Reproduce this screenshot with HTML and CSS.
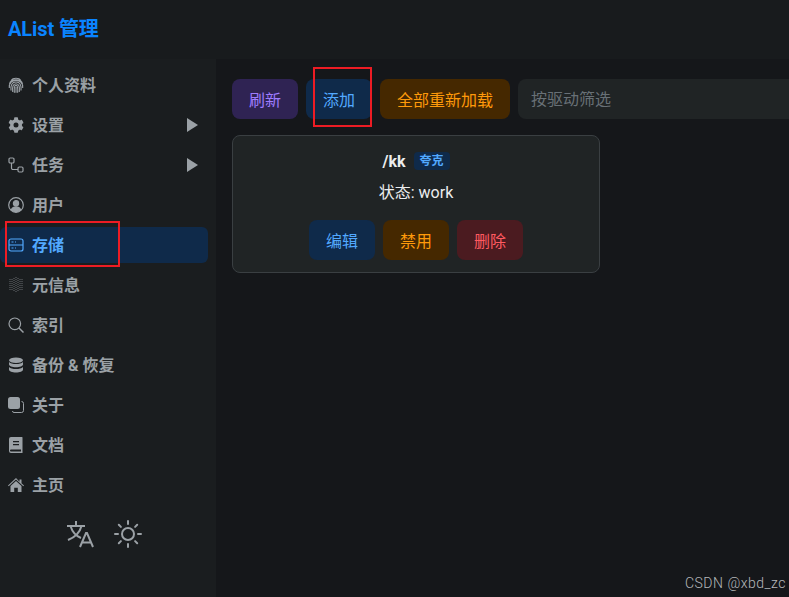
FILE: index.html
```html
<!DOCTYPE html>
<html lang="zh">
<head>
    <meta charset="UTF-8">
    <meta name="viewport" content="width=device-width, initial-scale=1.0">
    <title>AList 管理</title>
    <link rel="stylesheet" href="styles.css">
</head>
<body>
    <header class="topbar">
        <h1>AList 管理</h1>
    </header>

    <div class="layout">
        <aside class="sidebar">
            <nav class="menu">
                <a class="menu-item">
                    <svg class="icon" viewBox="0 0 16 16" fill="none" stroke="currentColor" stroke-width="1.100"><path d="M3 3.500C5 .5 11 .5 13 3.500M1.500 7c1-5.500 12-5.500 13 0M1.300 11C.8 6 4 3.500 8 3.500s7.200 2.500 6.700 7.500M3 13.500c-.6-5.500 1-8.500 5-8.500s5.600 3 5 8.500M4.700 15C4 10 5 6.800 8 6.800s4 3.200 3.300 8.200M6.400 15.800C6 11 6.300 8.400 8 8.400s2 2.600 1.600 7.400M8 10v5.800"/></svg>
                    <span>个人资料</span>
                </a>
                <a class="menu-item">
                    <svg class="icon" viewBox="0 0 512 512" fill="currentColor"><path fill-rule="evenodd" d="M487 316l-42-25a192 192 0 0 0 0-70l42-25c5-3 7-8 5-14-11-35-30-67-54-93-4-4-9-5-14-2l-42 24a190 190 0 0 0-61-35V28c0-6-4-10-9-11-36-8-73-8-108 0-5 1-9 5-9 11v48a190 190 0 0 0-61 35L92 87c-5-3-10-2-14 2-24 26-43 58-54 93-2 6 0 11 5 14l42 25a192 192 0 0 0 0 70l-42 25c-5 3-7 8-5 14 11 35 30 67 54 93 4 4 9 5 14 2l42-24a190 190 0 0 0 61 35v48c0 6 4 10 9 11 36 8 73 8 108 0 5-1 9-5 9-11v-48a190 190 0 0 0 61-35l42 24c5 3 10 2 14-2 24-26 43-58 54-93 2-6 0-11-5-14zM256 336a80 80 0 1 1 0-160 80 80 0 0 1 0 160z"/></svg>
                    <span>设置</span>
                    <svg class="caret" viewBox="0 0 12 14" fill="currentColor"><path d="M1 0v14l11-7z"/></svg>
                </a>
                <a class="menu-item">
                    <svg class="icon" viewBox="0 0 16 16" fill="none" stroke="currentColor" stroke-width="1.200"><rect x="1" y="1" width="5" height="5" rx="1.200"/><rect x="10" y="10" width="5" height="5" rx="1.200"/><path d="M3.500 6v5a1.500 1.500 0 0 0 1.500 1.500h5"/></svg>
                    <span>任务</span>
                    <svg class="caret" viewBox="0 0 12 14" fill="currentColor"><path d="M1 0v14l11-7z"/></svg>
                </a>
                <a class="menu-item">
                    <svg class="icon" viewBox="0 0 16 16" fill="none" stroke="currentColor" stroke-width="1.200"><circle cx="8" cy="8" r="7.300"/><circle cx="8" cy="6.300" r="2.600" fill="currentColor"/><path d="M3.300 12.800c1-2 2.700-3 4.700-3s3.700 1 4.700 3a7 7 0 0 1-9.400 0z" fill="currentColor"/></svg>
                    <span>用户</span>
                </a>
                <a class="menu-item active">
                    <svg class="icon" viewBox="0 0 16 16" fill="none" stroke="currentColor" stroke-width="1.200"><rect x="1" y="2" width="14" height="12" rx="2"/><path d="M1 8h14M3.500 5h2M7 5h1M3.500 11h2M7 11h1"/></svg>
                    <span>存储</span>
                </a>
                <a class="menu-item">
                    <svg class="icon" viewBox="0 0 16 16" fill="none" stroke="currentColor" stroke-width="1" stroke-dasharray="1 1" opacity="0.600"><path d="M2 2v12M4 2v12M6 1v14M8 0v16M10 1v14M12 2v12M14 2v12"/></svg>
                    <span>元信息</span>
                </a>
                <a class="menu-item">
                    <svg class="icon" viewBox="0 0 16 16" fill="none" stroke="currentColor" stroke-width="1.200"><circle cx="6.800" cy="6.800" r="5.800"/><path d="M11 11l4.500 4.500" stroke-width="1.500"/></svg>
                    <span>索引</span>
                </a>
                <a class="menu-item">
                    <svg class="icon" viewBox="0 0 16 16" fill="currentColor"><ellipse cx="8" cy="3.300" rx="7" ry="2.800"/><path d="M1 5v2.500c0 1.500 3.100 2.800 7 2.800s7-1.300 7-2.800V5c-1.300 1.400-4 2.100-7 2.100S2.300 6.400 1 5zM1 10v2.700c0 1.500 3.100 2.800 7 2.800s7-1.300 7-2.800V10c-1.300 1.400-4 2.100-7 2.100S2.300 11.400 1 10z"/></svg>
                    <span>备份 &amp; 恢复</span>
                </a>
                <a class="menu-item">
                    <svg class="icon" viewBox="0 0 16 16" fill="none"><rect x="0" y="0" width="12" height="12" rx="2.500" fill="currentColor"/><path d="M13.500 4.500a2 2 0 0 1 2 2v7a2 2 0 0 1-2 2H6a1.500 1.500 0 0 1-1.500-1.500" stroke="currentColor"/></svg>
                    <span>关于</span>
                </a>
                <a class="menu-item">
                    <svg class="icon" viewBox="0 0 16 16" fill="currentColor"><path fill-rule="evenodd" d="M3 0h11a.5.500 0 0 1 .5.500V16H3a2 2 0 0 1-2-2V2a2 2 0 0 1 2-2zM5 4v1.300h6V4zM5 7v1.300h6V7zM3 12.500a1 1 0 0 0 0 2h10v-2z"/></svg>
                    <span>文档</span>
                </a>
                <a class="menu-item">
                    <svg class="icon" viewBox="0 0 16 16" fill="currentColor"><path d="M8 1L0 8.500l.7.700L8 2.600l7.300 6.600.7-.700-2.500-2.300V2.500h-2v2.300z"/><path d="M8 4L2.500 9v6h3.700v-4.200h3.600V15h3.700V9z"/></svg>
                    <span>主页</span>
                </a>
            </nav>
            <div class="side-tools">
                <svg class="tool" viewBox="0 0 28 28" fill="none" stroke="currentColor" stroke-width="2"><path d="M1 6h18M10 1v5M15.500 6c-1.500 6-6 11-13.500 14M4.500 6c1.500 5 5.500 10 10.500 12"/><path d="M14 27l6-14h1l6 14M16 22.500h9"/></svg>
                <svg class="tool" viewBox="0 0 28 28" fill="none" stroke="currentColor" stroke-width="2" stroke-linecap="round"><circle cx="14" cy="14" r="6"/><path d="M14 1v3M14 24v3M1 14h3M24 14h3M4.800 4.800l2.100 2.100M21.100 21.100l2.100 2.100M4.800 23.200l2.100-2.100M21.100 6.900l2.100-2.100"/></svg>
            </div>
        </aside>

        <main class="content">
            <div class="toolbar">
                <button class="btn purple">刷新</button>
                <button class="btn blue">添加</button>
                <button class="btn orange">全部重新加载</button>
                <input class="filter" type="text" placeholder="按驱动筛选">
            </div>
            <div class="card">
                <div class="card-title">
                    <strong>/kk</strong>
                    <span class="tag">夸克</span>
                </div>
                <p class="card-status">状态: work</p>
                <div class="card-actions">
                    <button class="btn blue">编辑</button>
                    <button class="btn orange">禁用</button>
                    <button class="btn red">删除</button>
                </div>
            </div>
        </main>
    </div>

    <!-- 截图上的红框标注 -->
    <div class="mark mark-add"></div>
    <div class="mark mark-storage"></div>
    <div class="watermark">CSDN @xbd_zc</div>
</body>
</html>
```

FILE: styles.css
```css
* {
    margin: 0;
    padding: 0;
    box-sizing: border-box;
}

body {
    font-family: Roboto, "Noto Sans CJK SC", sans-serif;
    background: #15171a;
    color: #ecedee;
    width: 789px;
    height: 597px;
    overflow: hidden;
    position: relative;
}

/* 顶栏 */
.topbar {
    height: 59px;
    background: #181b1d;
    padding: 0 8px;
    display: flex;
    align-items: center;
}

.topbar h1 {
    font-size: 20px;
    font-weight: 700;
    color: #0a84ff;
    line-height: 1;
    margin-top: -2px;
    letter-spacing: -0.1px;
}

.layout {
    display: flex;
    height: 538px;
}

/* 侧边栏 */
.sidebar {
    width: 216px;
    background: #1a1d1f;
    padding: 8px 8px 0 0;
}

.menu {
    display: flex;
    flex-direction: column;
    gap: 4px;
}

.menu-item {
    height: 36px;
    padding: 0 8px;
    border-radius: 6px;
    display: flex;
    align-items: center;
    gap: 8px;
    font-size: 16px;
    font-weight: 700;
    color: #9ba1a6;
}

.menu-item span {
    margin-bottom: 2px;
}

.menu-item.active {
    background: #0f2a4a;
    color: #52a9ff;
}

.icon {
    width: 16px;
    height: 16px;
    flex: none;
}

.caret {
    width: 12px;
    height: 14px;
    margin-left: auto;
    margin-right: 2px;
}

.side-tools {
    display: flex;
    justify-content: center;
    gap: 20px;
    margin-top: 17px;
    color: #9ba1a6;
}

.tool {
    width: 28px;
    height: 28px;
}

/* 内容区 */
.content {
    flex: 1;
    min-width: 0;
    padding: 20px 0 0 16px;
}

.toolbar {
    display: flex;
    gap: 8px;
}

.btn {
    height: 40px;
    padding: 0 17px;
    border: none;
    border-radius: 8px;
    font-family: inherit;
    font-size: 16px;
    font-weight: 400;
    flex: none;
}

.purple {
    background: #2f2353;
    color: #9e7cff;
}

.blue {
    background: #0f2a4a;
    color: #52a9ff;
}

.orange {
    background: #452800;
    color: #ff9a0a;
}

.red {
    background: #4b1b20;
    color: #ff5a60;
}

.filter {
    flex: 1;
    min-width: 0;
    height: 40px;
    padding: 0 13px;
    background: #202425;
    border: none;
    border-radius: 8px 0 0 8px;
    font-family: inherit;
    font-size: 16px;
    color: #ecedee;
}

.filter::placeholder {
    color: #687076;
}

.card {
    width: 368px;
    height: 138px;
    margin-top: 16px;
    padding-top: 15px;
    background: #202425;
    border: 1px solid #3a3f42;
    border-radius: 8px;
    display: flex;
    flex-direction: column;
    align-items: center;
}

.card-title {
    display: flex;
    align-items: center;
    gap: 8px;
    height: 20px;
    font-size: 16px;
}

.card-title strong {
    font-weight: 700;
}

.tag {
    height: 18px;
    padding: 0 6px;
    background: #0f2a4a;
    border-radius: 4px;
    color: #52a9ff;
    font-size: 12px;
    font-weight: 700;
    line-height: 18px;
}

.card-status {
    margin-top: 11px;
    font-size: 16px;
    line-height: 22px;
}

.card-actions {
    display: flex;
    gap: 8px;
    margin-top: 16px;
}

/* 标注和水印 */
.mark {
    position: absolute;
    border: 2px solid #ed1c24;
}

.mark-add {
    left: 313px;
    top: 67px;
    width: 59px;
    height: 60px;
}

.mark-storage {
    left: 5px;
    top: 221px;
    width: 115px;
    height: 46px;
}

.watermark {
    position: absolute;
    right: 3px;
    bottom: 6px;
    font-size: 14px;
    font-weight: 300;
    color: #b5b8ba;
    letter-spacing: 0.5px;
}
```
